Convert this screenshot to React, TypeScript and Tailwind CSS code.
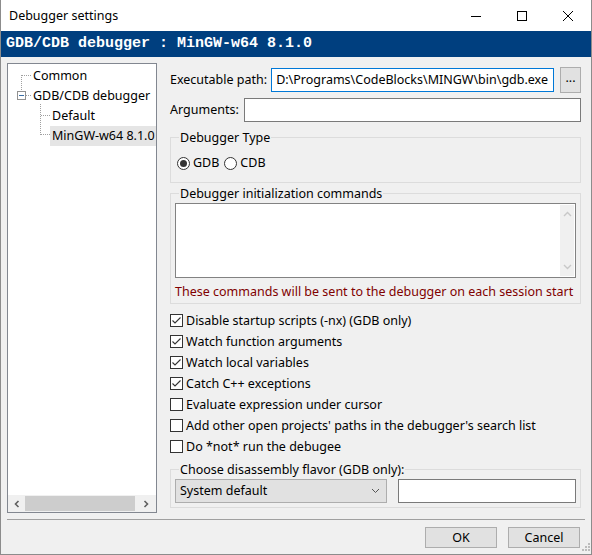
import React from 'react';

const ui = { fontFamily: '"Noto Sans", "Liberation Sans", sans-serif' };

function Check({ checked, label }: { checked: boolean; label: string }) {
  return (
    <div className="flex h-[21px] items-center">
      <span className="flex h-[13px] w-[13px] items-center justify-center border border-[#333] bg-white">
        {checked && (
          <svg width="11" height="11" viewBox="0 0 11 11">
            <path d="M1.5 5.5 L4 8 L9.5 2.5" fill="none" stroke="#333" strokeWidth="1.1" />
          </svg>
        )}
      </span>
      <span className="ml-[3px]">{label}</span>
    </div>
  );
}

function Radio({ on, label }: { on: boolean; label: string }) {
  return (
    <div className="flex items-center">
      <span className="flex h-[13px] w-[13px] items-center justify-center rounded-full border border-[#333] bg-white">
        {on && <span className="h-[7px] w-[7px] rounded-full bg-[#333]" />}
      </span>
      <span className="ml-[3px]">{label}</span>
    </div>
  );
}

function TreeLines() {
  return (
    <svg className="absolute left-0 top-0" width="60" height="150" viewBox="0 0 60 150">
      <g stroke="#a0a0a0" strokeWidth="1" strokeDasharray="1 1" shapeRendering="crispEdges">
        <line x1="13.5" y1="11" x2="13.5" y2="27" />
        <line x1="14" y1="11.5" x2="24" y2="11.5" />
        <line x1="18" y1="31.5" x2="24" y2="31.5" />
        <line x1="32.5" y1="40" x2="32.5" y2="71" />
        <line x1="33" y1="51.5" x2="42" y2="51.5" />
        <line x1="33" y1="70.5" x2="42" y2="70.5" />
      </g>
      <rect x="9.5" y="27.5" width="8" height="8" fill="#fff" stroke="#919191" shapeRendering="crispEdges" />
      <line x1="11" y1="31.5" x2="16" y2="31.5" stroke="#3a6ea5" shapeRendering="crispEdges" />
    </svg>
  );
}

function GroupBox({ title, children, className }: { title: string; children: React.ReactNode; className?: string }) {
  return (
    <fieldset className={`border border-[#dcdcdc] px-[4px] ${className ?? ''}`}>
      <legend className="ml-[4px] px-[1px] leading-[15px]">{title}</legend>
      {children}
    </fieldset>
  );
}

export default function App() {
  return (
    <div
      className="relative flex h-[555px] w-[592px] flex-col overflow-hidden border-x border-b border-[#8c8c8c] bg-[#f0f0f0] text-[12.5px] leading-[16px] text-black"
      style={ui}
    >
      {/* title bar */}
      <div className="flex h-[31px] shrink-0 items-center bg-white">
        <span className="ml-[8px]">Debugger settings</span>
        <div className="ml-auto flex h-full">
          <div className="flex w-[46px] items-center justify-center">
            <svg width="10" height="10" viewBox="0 0 10 10"><line x1="0" y1="5.5" x2="10" y2="5.5" stroke="#000" /></svg>
          </div>
          <div className="flex w-[46px] items-center justify-center">
            <svg width="10" height="10" viewBox="0 0 10 10"><rect x="0.5" y="0.5" width="9" height="9" fill="none" stroke="#000" /></svg>
          </div>
          <div className="flex w-[46px] items-center justify-center">
            <svg width="10" height="10" viewBox="0 0 10 10"><path d="M0 0 L10 10 M10 0 L0 10" stroke="#000" /></svg>
          </div>
        </div>
      </div>

      {/* header band */}
      <div className="flex h-[26px] shrink-0 items-center bg-[#003f7f] pl-[5px]">
        <span
          className="text-[15px] font-bold text-white"
          style={{ fontFamily: '"Liberation Mono", "DejaVu Sans Mono", monospace' }}
        >
          GDB/CDB debugger : MinGW-w64 8.1.0
        </span>
      </div>

      {/* body */}
      <div className="flex h-[456px] shrink-0 pl-[6px] pt-[6px]">
        {/* tree */}
        <div className="relative flex h-[450px] w-[150px] flex-col border border-[#828790] bg-white">
          <TreeLines />
          <div className="relative flex-1 pt-[2px]">
            <div className="flex h-[20px] items-center pl-[25px]">Common</div>
            <div className="flex h-[20px] items-center pl-[25px]">GDB/CDB debugger</div>
            <div className="flex h-[20px] items-center pl-[44px]">Default</div>
            <div className="ml-[42px] flex h-[20px] items-center whitespace-nowrap bg-[#e5e5e5] pl-[2px]">MinGW-w64 8.1.0</div>
          </div>
          <div className="flex h-[17px] items-center bg-[#f0f0f0]">
            <div className="flex w-[17px] justify-center">
              <svg width="8" height="8" viewBox="0 0 8 8"><path d="M5.5 1 L2.5 4 L5.5 7" fill="none" stroke="#606060" strokeWidth="1.6" /></svg>
            </div>
            <div className="h-[15px] w-[110px] bg-[#cdcdcd]" />
            <div className="flex flex-1 justify-center">
              <svg width="8" height="8" viewBox="0 0 8 8"><path d="M2.5 1 L5.5 4 L2.5 7" fill="none" stroke="#606060" strokeWidth="1.6" /></svg>
            </div>
          </div>
        </div>

        {/* right panel */}
        <div className="ml-[13px] mt-[3px] flex w-[411px] flex-col">
          <div className="flex h-[27px] items-center">
            <span className="shrink-0 whitespace-nowrap">Executable path:</span>
            <div className="ml-[4px] flex h-[24px] min-w-0 flex-1 items-center overflow-hidden whitespace-nowrap border border-[#0078d7] bg-white pl-[4px]">
              D:\Programs\CodeBlocks\MINGW\bin\gdb.exe
            </div>
            <div className="ml-[6px] flex h-[26px] w-[21px] shrink-0 items-center justify-center border border-[#adadad] bg-[#e1e1e1] pb-[3px]">
              ...
            </div>
          </div>

          <div className="mt-[5px] flex h-[24px] items-center">
            <span className="shrink-0">Arguments:</span>
            <div className="ml-[5px] h-[24px] flex-1 border border-[#7a7a7a] bg-white" />
          </div>

          <GroupBox title="Debugger Type" className="mt-[8px] h-[53px]">
            <div className="mt-[10px] flex items-center gap-[5px] pl-[2px]">
              <Radio on label="GDB" />
              <Radio on={false} label="CDB" />
            </div>
          </GroupBox>

          <GroupBox title="Debugger initialization commands" className="mt-[3px] h-[118px]">
            <div className="mt-[2px] flex h-[75px] border border-[#828282] bg-white">
              <div className="flex-1" />
              <div className="my-[1px] mr-[1px] flex w-[14px] flex-col items-center justify-between bg-[#f0f0f0] py-[6px]">
                <svg width="9" height="6" viewBox="0 0 9 6"><path d="M1 5 L4.5 1.5 L8 5" fill="none" stroke="#c8c8c8" strokeWidth="1.4" /></svg>
                <svg width="9" height="6" viewBox="0 0 9 6"><path d="M1 1 L4.5 4.5 L8 1" fill="none" stroke="#c8c8c8" strokeWidth="1.4" /></svg>
              </div>
            </div>
            <div className="mt-[6px] whitespace-nowrap text-[#800000]">
              These commands will be sent to the debugger on each session start
            </div>
          </GroupBox>

          <div className="mt-[6px] flex flex-col">
            <Check checked label="Disable startup scripts (-nx) (GDB only)" />
            <Check checked label="Watch function arguments" />
            <Check checked label="Watch local variables" />
            <Check checked label="Catch C++ exceptions" />
            <Check checked={false} label="Evaluate expression under cursor" />
            <Check checked={false} label="Add other open projects' paths in the debugger's search list" />
            <Check checked={false} label="Do *not* run the debugee" />
          </div>

          <GroupBox title="Choose disassembly flavor (GDB only):" className="mt-[5px] h-[46px]">
            <div className="mt-[2px] flex items-center">
              <div className="flex h-[24px] w-[212px] items-center border border-[#adadad] bg-[#e1e1e1] pl-[4px] pr-[6px]">
                <span>System default</span>
                <svg className="ml-auto" width="9" height="6" viewBox="0 0 9 6"><path d="M1 1 L4.5 4.5 L8 1" fill="none" stroke="#555" /></svg>
              </div>
              <div className="ml-[11px] h-[24px] w-[178px] border border-[#7a7a7a] bg-white" />
            </div>
          </GroupBox>
        </div>
      </div>

      {/* separator */}
      <div className="mx-[6px] mt-[6px] h-[2px] shrink-0 border-t border-[#a0a0a0] border-b-white" />

      {/* buttons */}
      <div className="mt-[6px] flex justify-end gap-[11px] pr-[11px]">
        <div className="flex h-[21px] w-[72px] items-center justify-center border border-[#adadad] bg-[#e1e1e1]">OK</div>
        <div className="flex h-[21px] w-[72px] items-center justify-center border border-[#adadad] bg-[#e1e1e1]">Cancel</div>
      </div>

      {/* size grip */}
      <svg className="absolute bottom-[1px] right-[1px]" width="10" height="10" viewBox="0 0 10 10">
        <g fill="#bcbcbc">
          <rect x="8" y="0" width="2" height="2" />
          <rect x="5" y="3" width="2" height="2" />
          <rect x="8" y="3" width="2" height="2" />
          <rect x="2" y="6" width="2" height="2" />
          <rect x="5" y="6" width="2" height="2" />
          <rect x="8" y="6" width="2" height="2" />
        </g>
      </svg>
    </div>
  );
}
